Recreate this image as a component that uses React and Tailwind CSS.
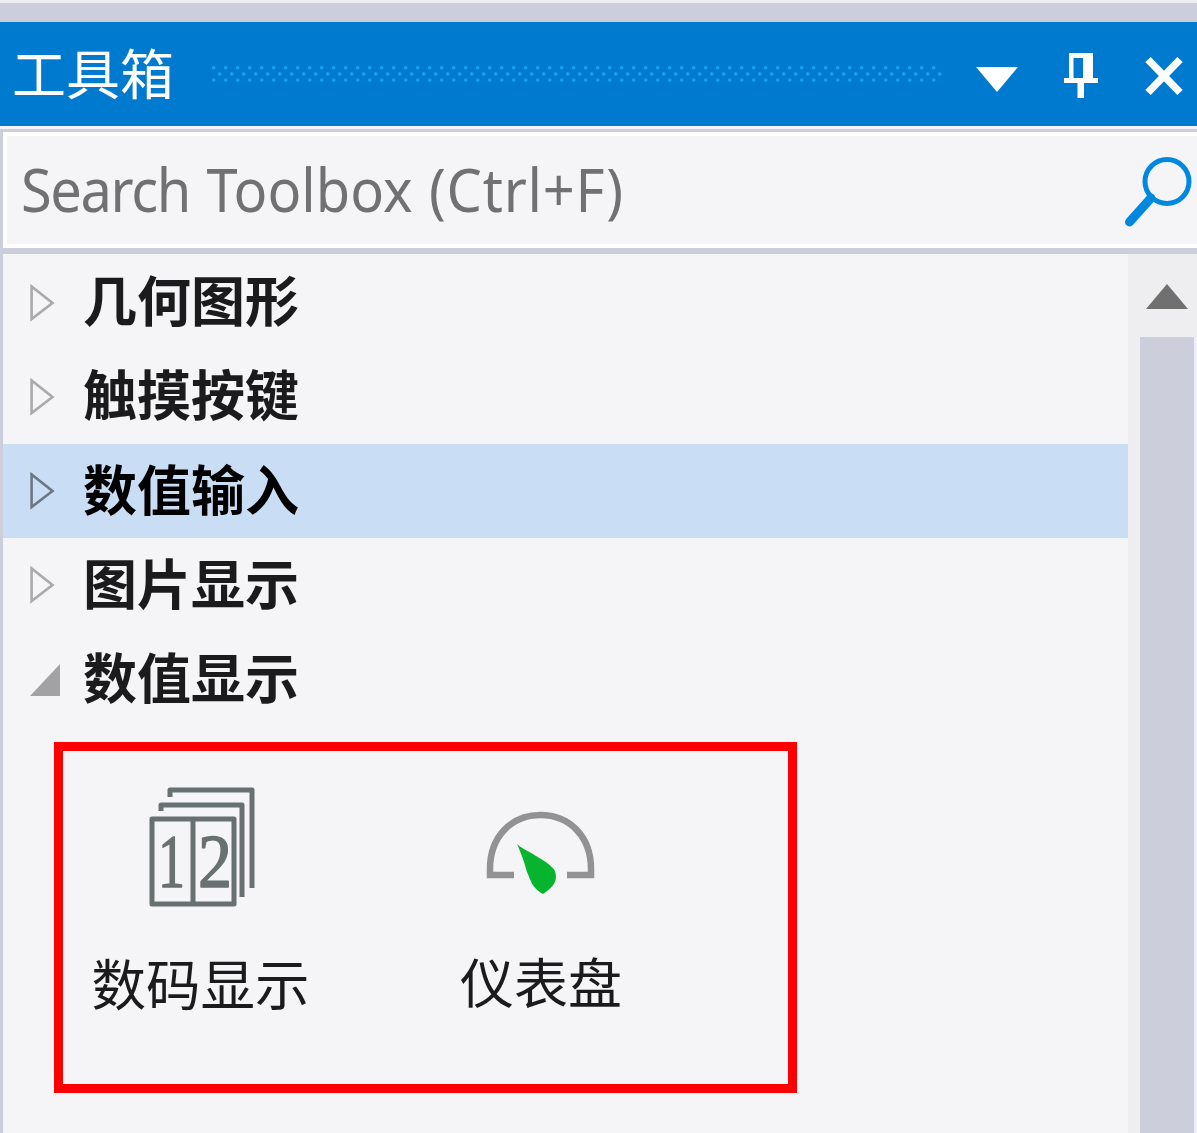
const cjk = "font-['Noto_Sans_CJK_SC','Noto_Sans',sans-serif]";

const categories = [
  { name: "几何图形" },
  { name: "触摸按键" },
  { name: "数值输入", selected: true },
  { name: "图片显示" },
  { name: "数值显示", open: true },
];

function Dots() {
  return (
    <svg className="ml-[37px] mt-[44px] h-4 w-[732px] shrink-0 self-start" aria-hidden="true">
      <defs>
        <pattern id="grip" width="12" height="16" patternUnits="userSpaceOnUse">
          <g fill="#10a0f2">
            <rect x="1" y="0" width="3.4" height="3.4" rx="1" />
            <rect x="7" y="6.3" width="3.4" height="3.4" rx="1" />
            <rect x="1" y="12.4" width="3.4" height="3.4" rx="1" />
          </g>
        </pattern>
      </defs>
      <rect width="732" height="16" fill="url(#grip)" />
    </svg>
  );
}

function TitleBar() {
  return (
    <header className="flex h-[104px] shrink-0 items-center bg-[#007acf]">
      <h1 className="ml-3 w-[162px] shrink-0 whitespace-nowrap pb-[5px] text-[54px] font-normal leading-[99px] text-white">工具箱</h1>
      <Dots />
      <svg className="ml-[33px] mt-[10px] h-[25px] w-[42px] shrink-0" viewBox="0 0 42 25" fill="#fff">
        <path d="M0 0H42L21 25Z" />
      </svg>
      <svg className="ml-[45px] mt-[3px] h-[45px] w-[36px] shrink-0" viewBox="0 0 36 45">
        <path fill="#fff" fillRule="evenodd" d="M6 0H30V25H35V30H21V45H14.500V30H1V25H6ZM10.500 5V25H20V5Z" />
      </svg>
      <svg className="ml-[46px] mt-[3px] h-[40px] w-[38px] shrink-0" viewBox="0 0 38 40" stroke="#fff" strokeWidth="7.500">
        <path d="M3 3.500L35 36.500M35 3.500L3 36.500" />
      </svg>
    </header>
  );
}

function SearchBox() {
  return (
    <div className="flex h-[125px] shrink-0 items-center border-b-[6px] border-l-[3px] border-t-[3px] border-[#cccedb]">
      <div className="flex h-full w-full items-center justify-between border-y-4 border-l-4 border-white bg-[#f5f5f8]">
        <span className="ml-[14px] origin-left scale-x-[0.918] whitespace-nowrap pb-[2px] font-['Noto_Sans',sans-serif] text-[61px] leading-[100px] text-[#717171]">
          <span className="tracking-[-1.5px]">Search</span>
          <span className="ml-[2px]"> Toolbox </span>
          <span className="ml-[2px] tracking-[0.8px]">(Ctrl+F)</span>
        </span>
        <svg className="mr-[5px] mt-[2px] h-[72px] w-[68px] shrink-0" viewBox="0 0 68 72" fill="none" stroke="#0088df">
          <circle cx="43" cy="26.500" r="22" strokeWidth="5" />
          <path d="M27 43L5.500 67" strokeWidth="9" strokeLinecap="round" />
        </svg>
      </div>
    </div>
  );
}

function Arrow({ open, selected }) {
  return (
    <svg className="mt-px h-[40px] w-[32px] shrink-0" viewBox="0 0 32 40">
      {open ? (
        <path d="M30 4V36H0Z" fill="#a2a2a4" />
      ) : (
        <path d="M1.600 3.500V36L22.500 20Z" fill="none" stroke={selected ? "#6c7783" : "#aaaaac"} strokeWidth="2.600" />
      )}
    </svg>
  );
}

function Category({ name, open, selected }) {
  return (
    <div className={`flex h-[94.25px] items-center pl-[27px] ${selected ? "bg-[#c9def5] text-black" : "text-[#1b1b1d]"}`}>
      <Arrow open={open} selected={selected} />
      <span className="ml-[21px] whitespace-nowrap pb-[6px] text-[54px] font-bold leading-[88px]">{name}</span>
    </div>
  );
}

function DigitsIcon() {
  return (
    <svg className="ml-2 h-[124px] w-[110px]" viewBox="0 0 110 124" fill="none" stroke="#697070" strokeWidth="5" strokeLinejoin="round">
      <path d="M22 12V5H104V103" />
      <path d="M13 26V20H94V112" />
      <rect x="4" y="34" width="82" height="85" />
      <path d="M45 34V119" />
      <g fill="#697070" stroke="#697070" strokeWidth="1.5" fontSize="77" className="font-['Liberation_Serif',serif]">
        <text x="10" y="102" textLength="27" lengthAdjust="spacingAndGlyphs">1</text>
        <text x="50" y="102" textLength="34" lengthAdjust="spacingAndGlyphs">2</text>
      </g>
    </svg>
  );
}

function GaugeIcon() {
  return (
    <svg className="h-[90px] w-[112px]" viewBox="0 0 112 90">
      <path d="M29 68H5V62C5 29 27 8 55.500 8S106 29 106 62V68H82" fill="none" stroke="#929294" strokeWidth="6.500" />
      <path d="M32 37C36 42 65 54 70 64C73 73 69 80 58 87C47 81 46 74 42 65C39 54 36 46 32 37Z" fill="#06b52d" />
    </svg>
  );
}

export default function App() {
  return (
    <main className={`flex h-[1133px] w-[1197px] flex-col overflow-hidden bg-[#f5f5f8] ${cjk}`}>
      <div className="h-[22px] shrink-0 border-t-[3px] border-[#eeeef2] bg-[#cccedb]" />
      <TitleBar />
      <div className="h-[3px] shrink-0" />
      <SearchBox />
      <div className="flex min-h-0 flex-1 border-l-[3px] border-[#cccedb]">
        <section className="w-[1125px] shrink-0 pt-[1px]">
          {categories.map((c) => (
            <Category key={c.name} {...c} />
          ))}
          <div className="ml-[51px] mt-[16px] flex h-[351px] w-[743px] border-[9px] border-[#ff0000] text-[54px] text-[#1b1b1d]">
            <div className="flex w-[272px] shrink-0 flex-col items-center pt-[34px]">
              <DigitsIcon />
              <span className="ml-[3px] mt-[33px] whitespace-nowrap text-[54.5px] leading-[80px]">数码显示</span>
            </div>
            <div className="ml-[70px] flex w-[272px] shrink-0 flex-col items-center pt-[56px]">
              <GaugeIcon />
              <span className="mt-[44px] whitespace-nowrap leading-[80px]">仪表盘</span>
            </div>
          </div>
        </section>
        <aside className="flex flex-1 flex-col bg-[#eeeef0] pl-3 pr-[3px]">
          <svg className="ml-[6px] mt-[30px] h-[25px] w-[42px] shrink-0" viewBox="0 0 42 25" fill="#707070">
            <path d="M21 0L42 25H0Z" />
          </svg>
          <div className="mt-[28px] flex-1 bg-[#cccedb]" />
        </aside>
      </div>
    </main>
  );
}
